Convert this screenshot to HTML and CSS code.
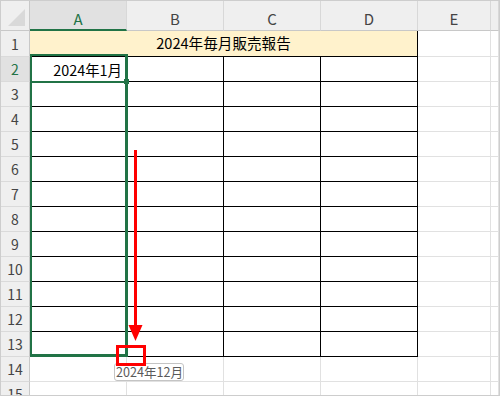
FILE: index.html
```html
<!DOCTYPE html>
<html lang="ja">
<head>
    <meta charset="UTF-8">
    <title>2024年毎月販売報告</title>
    <link rel="stylesheet" href="styles.css">
</head>
<body>
<div class="sheet">
    <div class="grid">
        <div class="corner">
            <svg width="18" height="18" viewBox="0 0 18 18"><polygon points="0,17 17,17 17,0" fill="#d9d9d9"/></svg>
        </div>
        <div class="colhead sel">A</div>
        <div class="colhead">B</div>
        <div class="colhead">C</div>
        <div class="colhead">D</div>
        <div class="colhead">E</div>
        <div class="colhead"></div>

        <div class="rowhead">1</div>
        <div class="title">2024年毎月販売報告</div>
        <div class="cell"></div><div class="cell"></div>

        <div class="rowhead sel">2</div>
        <div class="cell data value">2024年1月</div><div class="cell data"></div><div class="cell data"></div><div class="cell data"></div>
        <div class="cell"></div><div class="cell"></div>

        <div class="rowhead">3</div>
        <div class="cell data"></div><div class="cell data"></div><div class="cell data"></div><div class="cell data"></div>
        <div class="cell"></div><div class="cell"></div>

        <div class="rowhead">4</div>
        <div class="cell data"></div><div class="cell data"></div><div class="cell data"></div><div class="cell data"></div>
        <div class="cell"></div><div class="cell"></div>

        <div class="rowhead">5</div>
        <div class="cell data"></div><div class="cell data"></div><div class="cell data"></div><div class="cell data"></div>
        <div class="cell"></div><div class="cell"></div>

        <div class="rowhead">6</div>
        <div class="cell data"></div><div class="cell data"></div><div class="cell data"></div><div class="cell data"></div>
        <div class="cell"></div><div class="cell"></div>

        <div class="rowhead">7</div>
        <div class="cell data"></div><div class="cell data"></div><div class="cell data"></div><div class="cell data"></div>
        <div class="cell"></div><div class="cell"></div>

        <div class="rowhead">8</div>
        <div class="cell data"></div><div class="cell data"></div><div class="cell data"></div><div class="cell data"></div>
        <div class="cell"></div><div class="cell"></div>

        <div class="rowhead">9</div>
        <div class="cell data"></div><div class="cell data"></div><div class="cell data"></div><div class="cell data"></div>
        <div class="cell"></div><div class="cell"></div>

        <div class="rowhead">10</div>
        <div class="cell data"></div><div class="cell data"></div><div class="cell data"></div><div class="cell data"></div>
        <div class="cell"></div><div class="cell"></div>

        <div class="rowhead">11</div>
        <div class="cell data"></div><div class="cell data"></div><div class="cell data"></div><div class="cell data"></div>
        <div class="cell"></div><div class="cell"></div>

        <div class="rowhead">12</div>
        <div class="cell data"></div><div class="cell data"></div><div class="cell data"></div><div class="cell data"></div>
        <div class="cell"></div><div class="cell"></div>

        <div class="rowhead">13</div>
        <div class="cell data"></div><div class="cell data"></div><div class="cell data"></div><div class="cell data"></div>
        <div class="cell"></div><div class="cell"></div>

        <div class="rowhead">14</div>
        <div class="cell"></div><div class="cell"></div><div class="cell"></div><div class="cell"></div>
        <div class="cell"></div><div class="cell"></div>

        <div class="rowhead">15</div>
        <div class="cell"></div><div class="cell"></div><div class="cell"></div><div class="cell"></div>
        <div class="cell"></div><div class="cell"></div>
    </div>

    <!-- fill drag preview -->
    <div class="range"></div>
    <div class="active"></div>
    <div class="handle"></div>

    <svg class="arrow" width="20" height="196" viewBox="0 0 20 196">
        <rect x="8" y="2" width="3" height="178" fill="#ff0000"/>
        <polygon points="2.5,177 16.5,177 9.5,193" fill="#ff0000"/>
    </svg>

    <div class="tip">2024年12月</div>
    <div class="mark"></div>
</div>
</body>
</html>
```

FILE: styles.css
```css
*{
    margin:0;
    padding:0;
    box-sizing:border-box;
}
body{
    background:#fff;
    font-family:"Noto Sans CJK JP","Liberation Sans",sans-serif;
}
.sheet{
    position:relative;
    width:500px;
    height:396px;
    border:1px solid #cdcdcd;
    overflow:hidden;
}
.grid{
    display:grid;
    grid-template-columns:29px 97px 97px 97px 97px 73px 1fr;
    grid-template-rows:30px 26px repeat(14, 25px);
}

/* headers */
.corner{
    display:flex;
    align-items:flex-end;
    justify-content:flex-end;
    padding:0 3px 3px 0;
    background:#efefef;
    border-right:1px solid #c8c8c8;
    border-bottom:1px solid #c8c8c8;
}
.corner svg{
    display:block;
}
.colhead{
    display:flex;
    align-items:center;
    justify-content:center;
    padding-top:6px;
    font-size:15px;
    line-height:15px;
    color:#444;
    background:#efefef;
    border-right:1px solid #d8d8d8;
    border-bottom:1px solid #c8c8c8;
}
.colhead.sel{
    color:#217346;
    background:#e1e1e1;
    border-bottom:2px solid #217346;
}
.rowhead{
    display:flex;
    align-items:center;
    justify-content:center;
    font-size:14px;
    line-height:14px;
    color:#444;
    background:#efefef;
    border-right:1px solid #c8c8c8;
    border-bottom:1px solid #dadada;
}
.rowhead.sel{
    color:#217346;
    background:#e1e1e1;
}

/* cells */
.cell{
    border-right:1px solid #e1e1e1;
    border-bottom:1px solid #e1e1e1;
}
.cell.data{
    border-color:#000;
}
.title{
    grid-column:span 4;
    display:flex;
    align-items:center;
    justify-content:center;
    padding-bottom:2px;
    font-size:14.6px;
    color:#000;
    background:#fff2cc;
    border-right:1px solid #000;
    border-bottom:1px solid #000;
}
.value{
    display:flex;
    align-items:center;
    justify-content:flex-end;
    padding-right:4px;
    font-size:14.4px;
    color:#000;
}

/* selection */
.range{
    position:absolute;
    left:29px;
    top:53px;
    width:98px;
    height:303px;
    border:2px solid #217346;
    border-right-width:3px;
    border-bottom-width:3px;
}
.active{
    position:absolute;
    left:29px;
    top:53px;
    width:98px;
    height:29px;
    border:2px solid #217346;
    border-right-width:3px;
}
.handle{
    position:absolute;
    left:123px;
    top:78px;
    width:5px;
    height:5px;
    background:#217346;
}

/* annotations */
.arrow{
    position:absolute;
    left:125px;
    top:147px;
}
.tip{
    position:absolute;
    left:113px;
    top:362px;
    width:70px;
    height:18px;
    padding-left:1px;
    font-size:12.6px;
    line-height:16px;
    color:#5a5a5a;
    background:#fff;
    border:1px solid #c4c4c4;
    border-radius:3px;
    white-space:nowrap;
}
.mark{
    position:absolute;
    left:115px;
    top:344px;
    width:30px;
    height:21px;
    border:3px solid #ff0000;
}
```
